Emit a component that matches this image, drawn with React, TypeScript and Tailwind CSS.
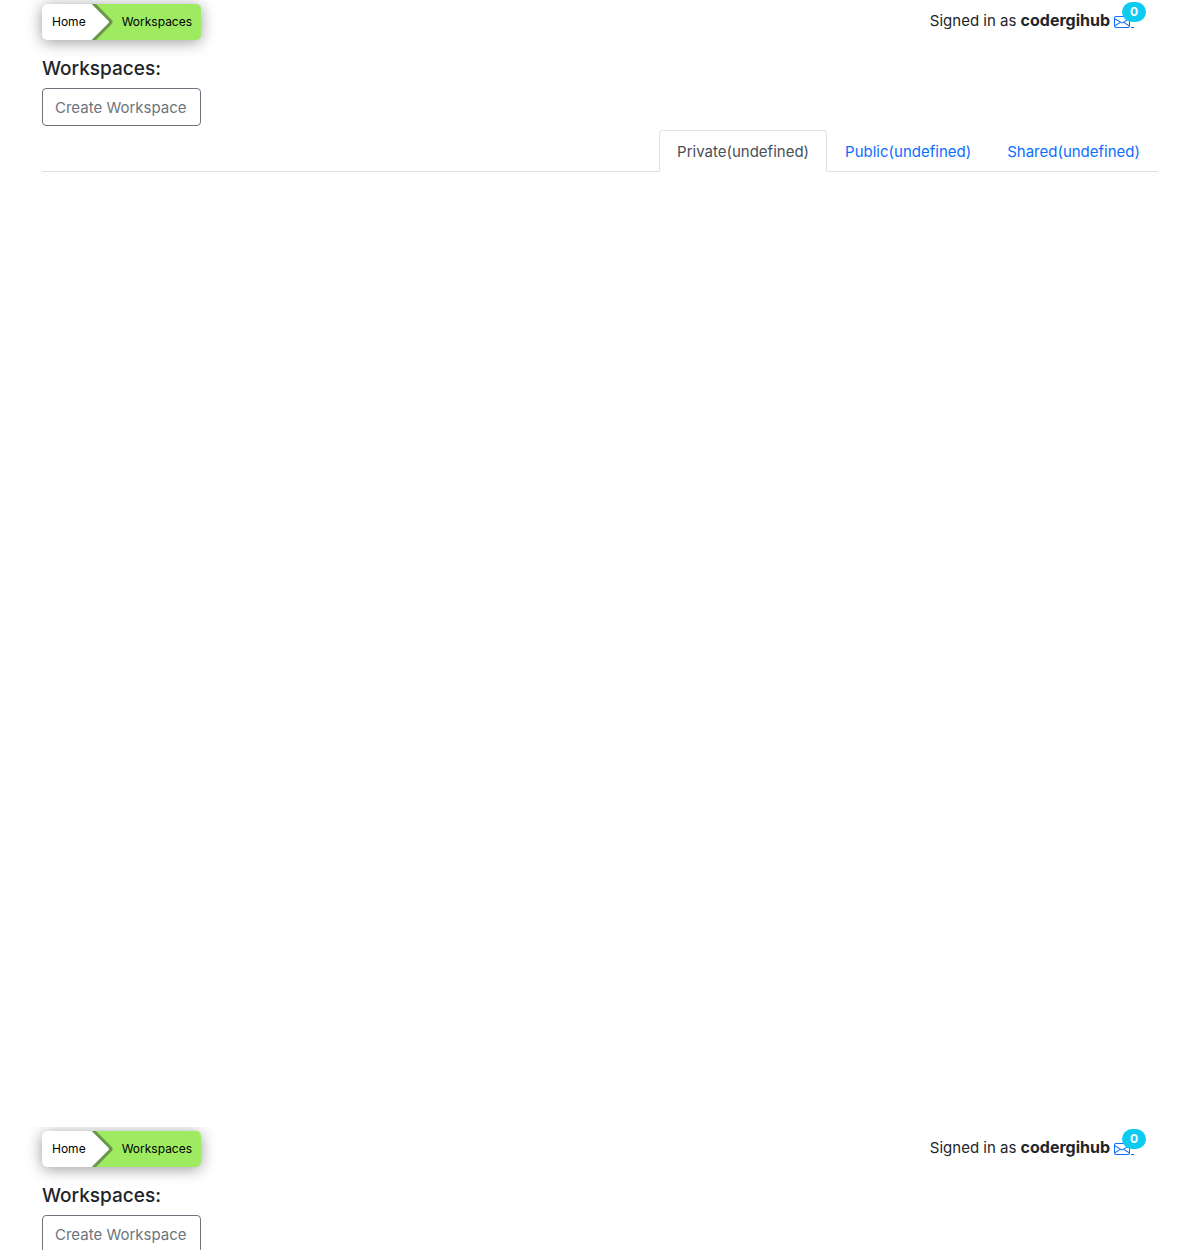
import { useState } from "react";
import type { ReactNode } from "react";
import { BsEnvelope } from "react-icons/bs";

const tabs = ["Private", "Public", "Shared"];

function Breadcrumb() {
  return (
    <nav aria-label="Breadcrumb" className="flex h-9 rounded-[5px] bg-[#9eeb62] text-[12px] text-black shadow-[0_2px_15px_rgba(0,0,0,0.4)]">
      <a href="#home" className="flex items-center rounded-l-[5px] bg-white pl-[10px] pr-[5px]">
        Home
      </a>
      <svg width="22" height="36" viewBox="0 0 22 36" aria-hidden="true">
        <path d="M0 0H5L21 16.3Q22.2 18 21 19.7L5 36H0Z" fill="#69964a" />
        <path d="M0 0H.6L17.6 17Q18.4 18 17.6 19L.6 36H0Z" fill="#fff" />
      </svg>
      <a href="#workspaces" aria-current="page" className="flex items-center pl-[9px] pr-[9px]">
        Workspaces
      </a>
    </nav>
  );
}

function UserStatus() {
  return (
    <div className="flex pr-6 pt-2 text-[15px] leading-6">
      <span>
        Signed in as <strong className="text-[16px] font-bold">codergihub</strong>
      </span>
      <a href="#messages" aria-label="Messages" className="relative ml-1 flex h-6 w-5 items-center text-[#0d6efd]">
        <BsEnvelope size={16} className="mt-1" />
        <span className="absolute bottom-1 right-0 h-px w-[3px] bg-[#0d6efd]" />
        <span className="absolute -top-[6px] left-2 flex h-5 w-6 items-center justify-center rounded-full bg-[#0dcaf0] text-[12px] font-bold text-white">
          0
        </span>
      </a>
    </div>
  );
}

function TabBar() {
  const [active, setActive] = useState("Private");
  return (
    <div role="tablist" className="mt-1 flex justify-end border-b border-[#dee2e6]">
      {tabs.map((tab) => (
        <button
          key={tab}
          type="button"
          role="tab"
          aria-selected={active === tab}
          onClick={() => setActive(tab)}
          className={
            active === tab
              ? "-mb-px h-[42px] rounded-t border border-[#dee2e6] border-b-white bg-white px-[17px] pt-[2px] text-[15px] text-[#495057]"
              : "-mb-px h-[42px] rounded-t border border-transparent px-[17px] pt-[2px] text-[15px] text-[#0d6efd]"
          }
        >
          {tab}(undefined)
        </button>
      ))}
    </div>
  );
}

function WorkspacesPanel({ children }: { children?: ReactNode }) {
  return (
    <section className="overflow-hidden px-[42px]">
      <header className="flex justify-between">
        <div className="pt-1">
          <Breadcrumb />
        </div>
        <UserStatus />
      </header>
      <h5 className="mb-[7px] mt-[17px] text-[19px] font-medium leading-6">Workspaces:</h5>
      <button type="button" className="block h-[38px] rounded border border-[#6c757d] pl-3 pr-[13px] pt-[2px] text-[15px] text-[#6c757d]">
        Create Workspace
      </button>
      {children}
    </section>
  );
}

export default function App() {
  return (
    <main className="flex h-screen flex-col overflow-hidden bg-white font-['Inter','Liberation_Sans',sans-serif] text-[#212529]">
      <div className="min-h-[1127px] shrink-0">
        <WorkspacesPanel>
          <TabBar />
        </WorkspacesPanel>
      </div>
      <div className="shrink-0">
        <WorkspacesPanel />
      </div>
    </main>
  );
}
